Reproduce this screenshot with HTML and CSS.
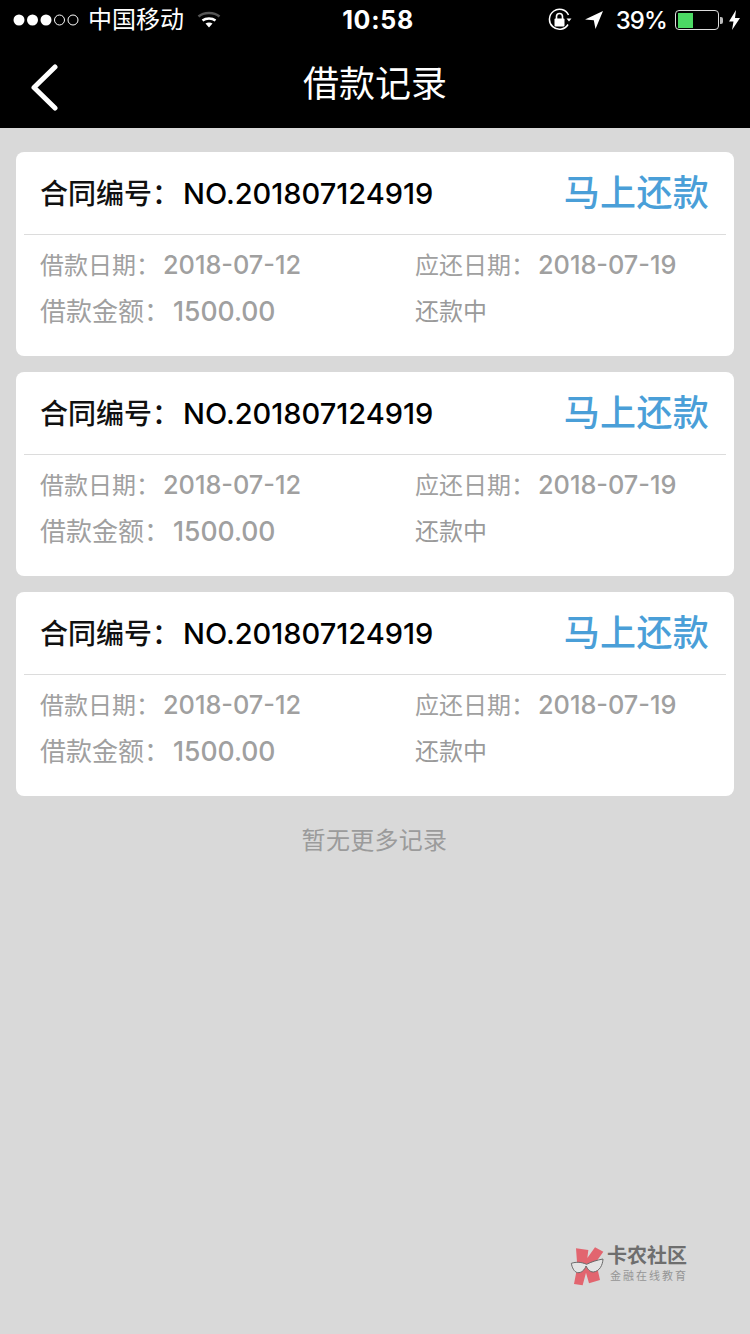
FILE: index.html
```html
<!DOCTYPE html>
<html lang="zh-CN">
<head>
<meta charset="utf-8">
<title>借款记录</title>
<link rel="stylesheet" href="styles.css">
</head>
<body>
<header class="top">
  <div class="status">
    <div class="status-left">
      <svg class="dots" width="68" height="14" viewBox="0 0 68 14"><circle cx="6" cy="7" r="5.5" fill="#fff"/><circle cx="19.500" cy="7" r="5.500" fill="#fff"/><circle cx="33" cy="7" r="5.500" fill="#fff"/><circle cx="46.500" cy="7" r="5" fill="none" stroke="#fff"/><circle cx="60" cy="7" r="5" fill="none" stroke="#fff"/></svg>
      <span class="carrier">中国移动</span>
      <svg class="wifi" width="24" height="18" viewBox="0 0 24 18"><path d="M1.500 5.500C7 .8 17 .8 22.500 5.500" fill="none" stroke="#555" stroke-width="2.500"/><path d="M5.500 9.500C9 6.800 15 6.800 18.500 9.500" fill="none" stroke="#fff" stroke-width="2.500"/><path d="M8.500 12.500C10.500 11.200 13.500 11.200 15.500 12.500L12 16.500Z" fill="#fff"/></svg>
    </div>
    <div class="clock">10:58</div>
    <div class="status-right">
      <svg width="24" height="24" viewBox="0 0 24 24"><path d="M20 16.500A10 10 0 1 1 20.500 7" fill="none" stroke="#fff" stroke-width="1.500"/><path d="M18.500 10.500h5l-2.500 3z" fill="#fff"/><rect x="6.500" y="10.500" width="10" height="8" rx="1" fill="#fff"/><path d="M8.500 11V8.500a3 3 0 0 1 6 0V11" fill="none" stroke="#fff" stroke-width="1.600"/></svg>
      <svg class="arrow" width="20" height="20" viewBox="0 0 20 20"><path d="M19 1L1 9.500l8.800.8L11.500 19z" fill="#fff"/></svg>
      <span class="pct">39%</span>
      <div class="battery"><div class="battery-fill"></div></div>
      <div class="nub"></div>
      <svg width="11" height="20" viewBox="0 0 11 20"><path d="M7 0L0 11.500h4.500L3 20l8-12H6z" fill="#fff"/></svg>
    </div>
  </div>
  <nav class="nav">
    <svg class="back" width="30" height="48" viewBox="0 0 30 48"><path d="M26 3L5 23.500l21 20.500" fill="none" stroke="#fff" stroke-width="5" stroke-linecap="round" stroke-linejoin="round"/></svg>
    <h1 class="title">借款记录</h1>
  </nav>
</header>
<main class="list">
  <section class="card">
    <div class="card-head"><div class="contract"><span class="contract-label">合同编号：</span>NO.201807124919</div><div class="repay">马上还款</div></div>
    <div class="card-body">
      <div class="row"><div class="cell"><span class="label">借款日期：</span>2018-07-12</div><div class="cell"><span class="label">应还日期：</span>2018-07-19</div></div>
      <div class="row"><div class="cell amount"><span class="label-lg">借款金额：</span>1500.00</div><div class="cell state">还款中</div></div>
    </div>
  </section>
  <section class="card">
    <div class="card-head"><div class="contract"><span class="contract-label">合同编号：</span>NO.201807124919</div><div class="repay">马上还款</div></div>
    <div class="card-body">
      <div class="row"><div class="cell"><span class="label">借款日期：</span>2018-07-12</div><div class="cell"><span class="label">应还日期：</span>2018-07-19</div></div>
      <div class="row"><div class="cell amount"><span class="label-lg">借款金额：</span>1500.00</div><div class="cell state">还款中</div></div>
    </div>
  </section>
  <section class="card">
    <div class="card-head"><div class="contract"><span class="contract-label">合同编号：</span>NO.201807124919</div><div class="repay">马上还款</div></div>
    <div class="card-body">
      <div class="row"><div class="cell"><span class="label">借款日期：</span>2018-07-12</div><div class="cell"><span class="label">应还日期：</span>2018-07-19</div></div>
      <div class="row"><div class="cell amount"><span class="label-lg">借款金额：</span>1500.00</div><div class="cell state">还款中</div></div>
    </div>
  </section>
  <p class="end">暂无更多记录</p>
</main>
<aside class="mark">
  <svg width="38" height="42" viewBox="60 45 114 126"><path d="M78 55L115 60 112 84 135 52 160 65 138 96 150 150 117 160 108 128 98 166 72 162 82 110Z" fill="#e2656f"/><path d="M64 100C78 95 95 96 110 103 122 96 142 90 159 87 158 105 149 124 130 126 119 126 113 117 108 108 104 120 94 129 83 128 72 126 66 112 64 100Z" fill="#e4e4e4" stroke="#6a6a6a" stroke-width="3"/></svg>
  <div class="mark-text"><div class="mark-name">卡农社区</div><div class="mark-sub">金融在线教育</div></div>
</aside>
</body>
</html>
```
FILE: styles.css
```css
* { box-sizing: border-box; }
html, body { margin: 0; padding: 0; }
body {
  width: 750px;
  height: 1334px;
  background: #d9d9d9;
  font-family: Inter, "Noto Sans CJK SC", sans-serif;
  position: relative;
  overflow: hidden;
}
.top { background: #000; height: 128px; color: #fff; }
.status {
  height: 40px;
  display: grid;
  grid-template-columns: 1fr auto 1fr;
  align-items: center;
  padding: 0 10px 0 13px;
  font-size: 25px;
}
.status-left, .status-right { display: flex; align-items: center; }
.status-right { justify-content: flex-end; }
.carrier { margin-left: 7px; font-size: 24px; line-height: 40px; }
.wifi { margin-left: 13px; }
.clock { font-weight: 700; font-size: 25px; letter-spacing: 0.7px; margin-left: 3px; }
.arrow { margin-left: 12px; }
.pct { margin-left: 12px; font-weight: 500; font-size: 24px; letter-spacing: -0.9px; }
.battery {
  margin-left: 8px;
  width: 44px;
  height: 20px;
  border: 1.500px solid #ddd;
  border-radius: 4px;
  padding: 1.500px;
}
.battery-fill { width: 15px; height: 100%; background: #4cd964; }
.nub { width: 3px; height: 7px; background: #bbb; margin: 0 6px 0 1px; border-radius: 0 2px 2px 0; }
.nav { height: 88px; display: flex; align-items: center; justify-content: center; position: relative; }
.back { position: absolute; left: 29px; top: 24px; }
.title { margin: 0; font-size: 36px; font-weight: 400; line-height: 88px; }
.list { padding: 24px 16px 0; display: flex; flex-direction: column; gap: 16px; }
.card { background: #fff; border-radius: 8px; height: 204px; padding: 0 8px; }
.card-head {
  height: 83px;
  border-bottom: 1px solid #dcdcdc;
  display: flex;
  align-items: center;
  justify-content: space-between;
  padding: 0 17px 2px 16px;
}
.contract { font-size: 29px; font-weight: 500; color: #000; white-space: nowrap; display: flex; align-items: baseline; }
.contract-label { font-size: 28px; font-weight: 500; width: 143px; color: #111; }
.repay { font-size: 36px; font-weight: 500; color: #4a9fd8; line-height: 1; margin-top: 2px; letter-spacing: 0.3px; }
.card-body { padding: 5px 0 0 16px; }
.row { display: grid; grid-template-columns: 375px 1fr; height: 46px; align-items: center; color: #a0a0a0; font-size: 25.300px; font-weight: 500; white-space: nowrap; }
.cell { display: flex; align-items: baseline; }
.label { font-weight: 400; font-size: 24px; width: 123px; }
.amount { font-size: 26.500px; }
.label-lg { font-weight: 400; font-size: 26px; width: 133px; }
.state { font-size: 24px; font-weight: 400; color: #9a9a9a; }
.end { margin: 12px 0 0; text-align: center; font-size: 24px; color: #9b9b9b; line-height: 34px; letter-spacing: 0.3px; transform: translateX(-0.5px); }
.mark {
  position: absolute;
  left: 570px;
  top: 1245px;
  display: flex;
  align-items: flex-start;
}
.mark-name { font-size: 20px; font-weight: 700; color: #6e6e6e; line-height: 22px; margin-left: -1px; }
.mark-sub { font-size: 11px; color: #959595; line-height: 18px; letter-spacing: 2px; white-space: nowrap; margin-left: 2px; }
```
